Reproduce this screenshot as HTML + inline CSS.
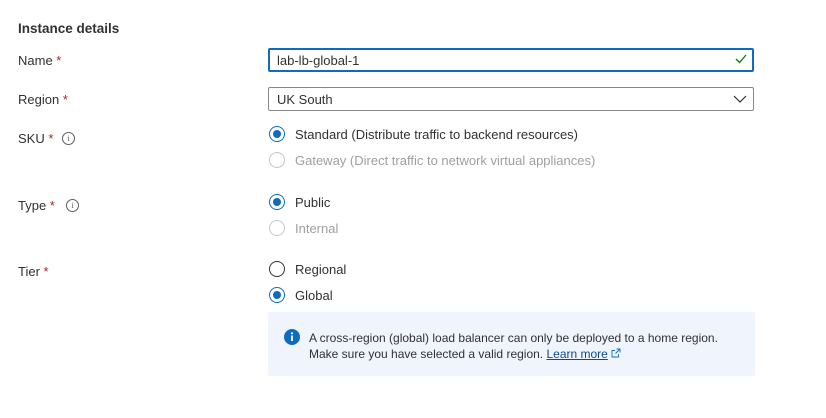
<!DOCTYPE html>
<html><head><style>
body{margin:0;width:826px;height:418px;background:#fff;font-family:"Liberation Sans",Arial,sans-serif;font-size:13px;color:#323130;position:relative;overflow:hidden}
.a{position:absolute;white-space:nowrap}
.req{color:#a4262c}
.h{font-weight:bold;font-size:13.5px}
.inp{position:absolute;left:268px;width:486px;box-sizing:border-box;background:#fff}
.r{position:absolute;left:269px;width:16px;height:16px;box-sizing:border-box;border-radius:50%;border:1px solid #323130}
.r.on{border-color:#0f6cbd}
.r.on::after{content:"";position:absolute;left:3px;top:3px;width:8px;height:8px;border-radius:50%;background:#0f6cbd}
.r.dis{border-color:#c8c6c4}
.dis-t{color:#a19f9d}
.i{position:absolute;width:11px;height:11px;border:1px solid #605e5c;border-radius:50%;font-size:8px;line-height:11px;text-align:center;color:#605e5c;font-family:"Liberation Serif",serif}
</style></head><body>
<div class="a h" style="left:18px;top:21px">Instance details</div>
<div class="a" style="left:18px;top:53px">Name <span class="req">*</span></div>
<div class="inp" style="top:48px;height:24px;border:2px solid #0f6cbd;border-radius:2px"></div>
<div class="a" style="left:277px;top:53px">lab-lb-global-1</div>
<svg class="a" style="left:735px;top:54px" width="12" height="10" viewBox="0 0 12 10"><path d="M1 5l3.5 3.5L11 1" fill="none" stroke="#107c10" stroke-width="1.3"/></svg>
<div class="a" style="left:18px;top:92px">Region <span class="req">*</span></div>
<div class="inp" style="top:87px;height:24px;border:1px solid #8a8886;border-radius:2px"></div>
<div class="a" style="left:277px;top:92px">UK South</div>
<svg class="a" style="left:733px;top:95px" width="14" height="8" viewBox="0 0 14 8"><path d="M1 1l6 6 6-6" fill="none" stroke="#323130" stroke-width="1.2"/></svg>
<div class="a" style="left:18px;top:131px">SKU <span class="req">*</span></div>
<div class="i" style="left:62px;top:132px">i</div>
<div class="r on" style="top:126px"></div><div class="a" style="left:295px;top:127px">Standard (Distribute traffic to backend resources)</div>
<div class="r dis" style="top:152px"></div><div class="a dis-t" style="left:295px;top:153px">Gateway (Direct traffic to network virtual appliances)</div>
<div class="a" style="left:18px;top:198px">Type <span class="req">*</span></div>
<div class="i" style="left:66px;top:199px">i</div>
<div class="r on" style="top:194px"></div><div class="a" style="left:295px;top:195px">Public</div>
<div class="r dis" style="top:220px"></div><div class="a dis-t" style="left:295px;top:221px">Internal</div>
<div class="a" style="left:18px;top:264px">Tier <span class="req">*</span></div>
<div class="r" style="top:261px"></div><div class="a" style="left:295px;top:262px">Regional</div>
<div class="r on" style="top:287px"></div><div class="a" style="left:295px;top:288px">Global</div>
<div class="a" style="left:268px;top:312px;width:487px;height:64px;background:#f0f4fc;border-radius:2px"></div>
<svg class="a" style="left:284px;top:329px" width="16" height="16" viewBox="0 0 16 16"><circle cx="8" cy="8" r="8" fill="#0f6cbd"/><rect x="7.1" y="6.5" width="1.8" height="5.5" fill="#fff"/><circle cx="8" cy="4.3" r="1.1" fill="#fff"/></svg>
<div class="a" style="left:309px;top:330px;font-size:12px;line-height:16px">A cross-region (global) load balancer can only be deployed to a home region.<br>Make sure you have selected a valid region. <span style="color:#0f4a8a;text-decoration:underline">Learn more</span> <svg width="10" height="10" viewBox="0 0 10 10" style="vertical-align:0"><path d="M5.5 1H9v3.5M9 1L4.5 5.5M7.5 6v3h-6.5V2.5h3" fill="none" stroke="#0f6cbd" stroke-width="0.9"/></svg></div>
</body></html>
